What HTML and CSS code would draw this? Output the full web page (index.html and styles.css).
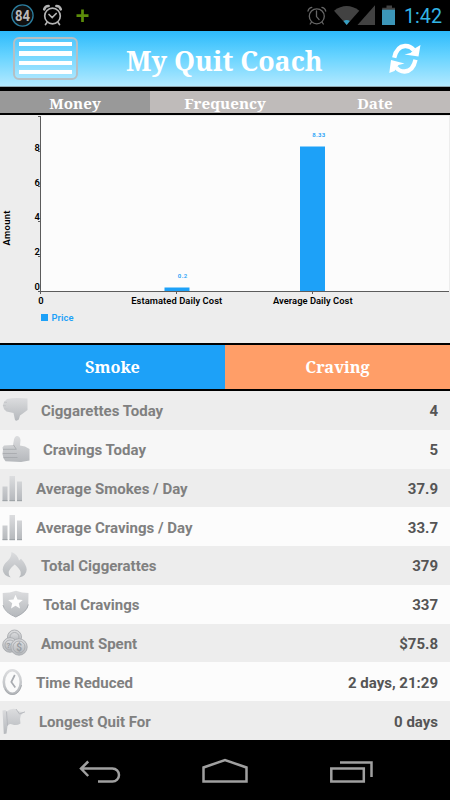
FILE: index.html
```html
<!DOCTYPE html>
<html lang="en">
<head>
  <meta charset="UTF-8" />
  <title>My Quit Coach</title>
  <link rel="stylesheet" href="styles.css">
</head>
<body>
  <div class="status-bar">
    <svg width="450" height="31" viewBox="0 0 450 31">
      <circle cx="22.5" cy="15.5" r="10.6" fill="#111" stroke="#2b7d9e" stroke-width="1.3"/>
      <text class="status-count" x="22.5" y="21" text-anchor="middle" textLength="15" lengthAdjust="spacingAndGlyphs">84</text>
      <g fill="none" stroke="#b4b4b4" stroke-width="1.7" stroke-linecap="round">
        <circle cx="52.5" cy="16" r="7.8"/>
        <path d="M49 14.5l3.2 3 4-4"/>
        <path d="M44.2 9.3q1-3.3 4.4-3.3M60.8 9.3q-1-3.3-4.4-3.3" stroke-width="2.6"/>
        <path d="M47 22.5l-1.5 2M58 22.5l1.5 2"/>
      </g>
      <path d="M76.5 15.7h12M82.5 9.5v12.5" stroke="#5c8c0a" stroke-width="2.7"/>
      <g fill="none" stroke="#666" stroke-width="1.3" stroke-linecap="round">
        <circle cx="316.8" cy="16.3" r="7.5"/>
        <path d="M316.5 11v5.6l2.6 3M308 11q.5-3 3.8-3.7M325.7 11q-.5-3-3.8-3.7M311.5 22l-1.3 2M322 22l1.3 2"/>
      </g>
      <path d="M334 10.7Q346.7 1.5 359.3 10.7L346.7 25z" fill="#424242"/>
      <path d="M343.5 21q3.2-2 6.3 0L346.7 25z" fill="#36a0c4"/>
      <path d="M375 5.3V25H357.5z" fill="#424242"/>
      <path d="M386.5 5.5h5.5v2.2h3V10h-12.8V7.7h4.3z" fill="#424242"/>
      <path d="M382 9.7h13V25h-13z" fill="#3c96b9"/>
      <text class="status-time" x="404" y="23" textLength="38" lengthAdjust="spacingAndGlyphs">1:42</text>
    </svg>
  </div>

  <div class="header">
    <button class="menu-button"><span></span><span></span><span></span><span></span></button>
    <h1>My Quit Coach</h1>
    <svg class="refresh" width="32" height="32" viewBox="0 0 32 32">
      <g fill="none" stroke="#fff" stroke-width="4.3">
        <path d="M5.2 14.8C6.8 7.300 10.500 3.400 16 3c3.500-.2 6.500 1.300 8.800 4"/>
        <path d="M26.500 16.800c-1.600 7.500-5.200 11.300-10.700 11.700-3.600.2-6.600-1.500-8.600-4"/>
      </g>
      <path d="M31.500 2l-2 11.500-14-2 6-1.500 5-5zM.3 30l1.700-13 13.500 3.500-6 1.500-4 6z" fill="#fff"/>
    </svg>
  </div>

  <div class="tabs">
    <div class="tab active">Money</div>
    <div class="tab">Frequency</div>
    <div class="tab">Date</div>
  </div>

  <div class="chart">
    <svg width="450" height="228" viewBox="0 0 450 228">
      <rect x="41" y="1" width="408" height="175" fill="#fcfcfc"/>
      <g fill="#1da1f8">
        <rect x="164.500" y="172.500" width="25" height="3.500"/>
        <rect x="300" y="31.500" width="25" height="144.500"/>
        <rect x="41" y="199" width="7" height="7"/>
      </g>
      <path d="M40.500 1v178M38 176.500h411M38 1.500h3M38 36.500h3M38 71.500h3M38 106.500h3M38 141.500h3M176.500 176v3M312.500 176v3" fill="none" stroke="#5c5c5c"/>
      <g class="axis" text-anchor="end">
        <text x="39.800" y="175">0</text>
        <text x="39.800" y="140">2</text>
        <text x="39.800" y="105">4</text>
        <text x="39.800" y="70.500">6</text>
        <text x="39.800" y="35.500">8</text>
      </g>
      <g class="axis" text-anchor="middle">
        <text x="41" y="189">0</text>
        <text x="176.700" y="189" textLength="91">Estamated Daily Cost</text>
        <text x="312.800" y="189" textLength="79.500">Average Daily Cost</text>
        <text transform="translate(10 113) rotate(-90)" textLength="35">Amount</text>
      </g>
      <text class="value" x="182.500" y="163" textLength="9.500">0.2</text>
      <text class="value" x="318.800" y="22" textLength="13">8.33</text>
      <text class="legend" x="51.500" y="205.500" textLength="22">Price</text>
    </svg>
  </div>

  <div class="actions">
    <button class="smoke">Smoke</button>
    <button class="craving">Craving</button>
  </div>

  <svg class="defs" width="0" height="0">
    <defs>
      <linearGradient id="silver" x1="0" y1="0" x2="0" y2="1">
        <stop offset="0" stop-color="#dcdddf"/>
        <stop offset="1" stop-color="#b5b8bc"/>
      </linearGradient>
    </defs>
  </svg>

  <div class="stats">
    <div class="row">
      <svg width="26" height="26" viewBox="0 0 26 26"><path d="M5 2Q11 .5 17 1L25.500 1.500V13l-4 3-3.500 2.500-1.200 4Q14.500 24.500 13 23l-1.500-7L4.500 14.500 2 12 .8 8.500 2 5z" fill="url(#silver)"/><path d="M2 5.200l3 .2M1 8.500l3 .2M2.500 12l3-.2" stroke="#c5c7ca"/></svg>
      <span class="label">Ciggarettes Today</span><span class="num">4</span>
    </div>
    <div class="row">
      <svg width="28" height="28" viewBox="0 0 28 28"><path d="M2 10.500l9-.5 1-5.500Q13 .5 15.500 1q2.500.5 3 4l-.5 5.500 5 1L27.500 14v11.500l-8.500 1.500-15.500-.7-2-3L.5 19 1 15l-.5-2.500z" fill="url(#silver)"/><path d="M1 14.300h13M.8 18.500h14M1.500 22.500h14M11.500 10l3 4.500" stroke="#a4a7ab" stroke-width=".8" fill="none"/></svg>
      <span class="label">Cravings Today</span><span class="num">5</span>
    </div>
    <div class="row">
      <svg width="21" height="28" viewBox="0 0 21 28"><path d="M.5 12.500h5V27h-5zM7.500 2H13v25H7.500zM15 7.500h5V27h-5z" fill="url(#silver)"/><path d="M.5 26.700h5M7.500 26.700H13M15 26.700h5" stroke="#9b9fa3"/></svg>
      <span class="label">Average Smokes / Day</span><span class="num">37.9</span>
    </div>
    <div class="row">
      <svg width="21" height="28" viewBox="0 0 21 28"><path d="M.5 12.500h5V27h-5zM7.500 2H13v25H7.500zM15 7.500h5V27h-5z" fill="url(#silver)"/><path d="M.5 26.700h5M7.500 26.700H13M15 26.700h5" stroke="#9b9fa3"/></svg>
      <span class="label">Average Cravings / Day</span><span class="num">33.7</span>
    </div>
    <div class="row">
      <svg width="26" height="28" viewBox="0 0 26 28"><path d="M9.500 1q6.500 2.800 7.500 8.500l2-1.700q5.500 6 5.700 10.700Q24.500 25 17 26.500q2.500-2.500 1.700-5.500-1-3.500-6-7.500-5.500 4.500-6 7.500-.5 3 2 5.500Q1 24.500.7 18.500.7 14 6 9.500 9.300 6.500 9.500 1z" fill="url(#silver)"/></svg>
      <span class="label">Total Ciggerattes</span><span class="num">379</span>
    </div>
    <div class="row">
      <svg width="28" height="28" viewBox="0 0 28 28"><path d="M.7 3Q8 3 14 .8 20 3 26.500 3l-.2 11q-.5 8-12.500 13Q2 22 1 14z" fill="url(#silver)"/><path d="M13.500 4.800l2 4.700 5.300.5-4 3.300 1.200 5.200-4.500-2.700L9 18.500l1.200-5.200-4-3.300 5.300-.5z" fill="#fdfdfd"/><path d="M1 15q1.500 7.500 12.800 12Q25 22 26.300 14.500" fill="none" stroke="#a7abb0"/></svg>
      <span class="label">Total Cravings</span><span class="num">337</span>
    </div>
    <div class="row">
      <svg width="26" height="28" viewBox="0 0 26 28"><g fill="url(#silver)" stroke="#a3a6aa" stroke-width=".8"><circle cx="12.500" cy="8" r="7"/><circle cx="12.500" cy="8" r="4.500"/><circle cx="8" cy="16" r="7.300"/><circle cx="8" cy="16" r="5"/><circle cx="17" cy="18" r="8.200"/><circle cx="17" cy="18" r="6"/></g><text class="coin" x="14.300" y="22">$</text><text class="coin small" x="4.500" y="19">?</text></svg>
      <span class="label">Amount Spent</span><span class="num">$75.8</span>
    </div>
    <div class="row">
      <svg width="21" height="28" viewBox="0 0 21 28"><ellipse cx="10.300" cy="14" rx="8.500" ry="11.700" fill="#fafafa" stroke="url(#silver)" stroke-width="2.600"/><path d="M19.500 17q-2 8.800-8.500 9.500-5.500 0-8-5.500" fill="none" stroke="#aaadb1"/><path d="M12.800 7l-3.500 7 4 5.500" fill="none" stroke="#a8abb0" stroke-width="1.700"/></svg>
      <span class="label">Time Reduced</span><span class="num">2 days, 21:29</span>
    </div>
    <div class="row">
      <svg width="24" height="28" viewBox="0 0 24 28"><path d="M.5 3.500l3-.5 1 1.500Q9 1 13.500 2q2.500 3.500 9.700 3-3.500 1-4.500 3.500-1.200 3-.2 8-4 2.500-8 1Q7 16 5.500 19l-1 7.500-2.700.5z" fill="url(#silver)"/><path d="M14 2l3.500 5 5.500-2.200M4.500 4.500l1 14" fill="none" stroke="#b0b3b7" stroke-width=".8"/></svg>
      <span class="label">Longest Quit For</span><span class="num">0 days</span>
    </div>
  </div>

  <div class="nav-bar">
    <svg width="450" height="60" viewBox="0 0 450 60">
      <g fill="none" stroke="#a0a0a0" stroke-width="2.500">
        <path d="M98 41.500h14.500a6.500 6.500 0 0 0 0-13H81M88.200 21.500L81 28.500l7.200 7.500"/>
        <path d="M203.500 41.500V27.500L225 20l21.500 7.500v14z"/>
        <path d="M331.300 28.500h32.500v13h-32.500zM340 22.500h31.500V37"/>
      </g>
    </svg>
  </div>
</body>
</html>
```

FILE: styles.css
```css
body {
  margin: 0;
  width: 450px;
  height: 800px;
  overflow: hidden;
  background: #000;
  font-family: Roboto, "Liberation Sans", sans-serif;
}
svg {
  display: block;
  flex-shrink: 0;
}
button {
  border: none;
  padding: 0;
  font-family: inherit;
}
.status-bar {
  height: 31px;
}
.status-count {
  font-size: 15px;
  font-weight: bold;
  fill: #bbb;
}
.status-time {
  font-size: 21px;
  fill: #33b5e5;
}
.header {
  display: flex;
  align-items: center;
  height: 56px;
  box-sizing: border-box;
  padding: 0 29px 0 13px;
  background: linear-gradient(#2dbafb, #66d3ff 45%, #b2e9ff);
  border-bottom: 1px solid #8fa9b3;
}
.menu-button {
  display: flex;
  flex-direction: column;
  gap: 5px;
  width: 65px;
  height: 43px;
  box-sizing: border-box;
  padding: 3px 4px 4px;
  border: 2px solid #b5bfc4;
  border-radius: 6px;
  background: rgba(255,255,255,0.1);
}
.menu-button span {
  width: 53px;
  height: 5px;
  background: white;
}
h1, .tab, .actions button {
  font-family: "Droid Serif", "Noto Serif", "DejaVu Serif Condensed", "DejaVu Serif", serif;
  font-weight: bold;
  color: white;
}
h1 {
  flex: 1;
  margin: 3px 0 0 48px;
  font-size: 26.8px;
  white-space: nowrap;
}
.refresh {
  margin-top: 1px;
}
.tabs {
  display: flex;
  height: 22px;
  margin: 4px 0 2px;
}
.tab {
  flex: 1;
  background: #bfbbba;
  font-size: 15.2px;
  line-height: 24px;
  text-align: center;
}
.tab.active {
  background: #999;
}
.chart {
  height: 228px;
  background: #ededed;
}
.axis {
  font-size: 9.4px;
  font-weight: 600;
  fill: #000;
}
.value {
  font-size: 6px;
  font-weight: 600;
  text-anchor: middle;
  fill: #1da1f8;
}
.legend {
  font-size: 9.4px;
  font-weight: 600;
  fill: #1da1f8;
}
.actions {
  display: flex;
  height: 44px;
  margin: 2px 0;
}
.actions button {
  flex: 1;
  font-size: 16.3px;
}
.actions .smoke {
  background: #1da1f8;
}
.actions .craving {
  background: #ff9e68;
}
.defs {
  position: absolute;
}
.stats {
  display: grid;
  grid-template-rows: repeat(9, 1fr);
  height: 349px;
}
.row {
  display: flex;
  align-items: center;
  min-height: 0;
  padding: 0 12px 0 2px;
  background: #ededed;
  font-size: 15px;
  font-weight: 700;
}
.row:nth-child(even) {
  background: #fcfcfc;
}
.row:nth-child(2) {
  background: #f7f7f7;
}
.label {
  flex: 1;
  margin: 2px 0 0 13px;
  color: #808080;
}
.num {
  margin-top: 2px;
  color: #555;
}
.coin {
  font-size: 10px;
  font-weight: bold;
  fill: #999da1;
}
.small {
  font-size: 8px;
}
.nav-bar {
  height: 60px;
}
```
